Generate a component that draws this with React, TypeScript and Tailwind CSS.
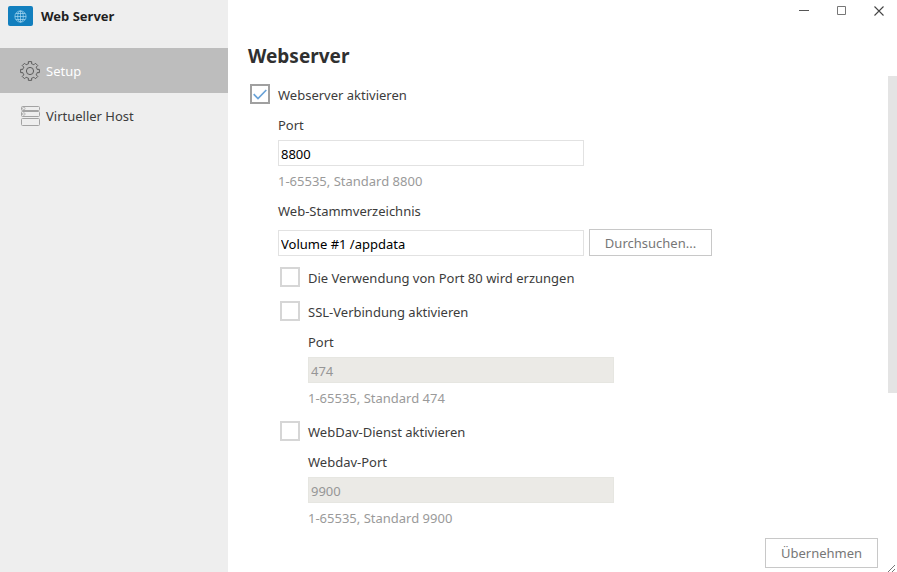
import { useState } from "react";
import type { ReactNode } from "react";

function GlobeLogo() {
  return (
    <span className="flex h-5 w-[25px] items-center justify-center rounded-xs bg-[#127fbe]">
      <svg width="13" height="13" viewBox="0 0 13 13" fill="none" stroke="#a9daf2" strokeWidth="0.7" aria-hidden="true">
        <circle cx="6.5" cy="6.5" r="5.6" />
        <ellipse cx="6.5" cy="6.5" rx="2.8" ry="5.6" />
        <path d="M6.5 0.9v11.2M0.9 6.5h11.2M1.8 3.5h9.4M1.8 9.5h9.4" />
      </svg>
    </span>
  );
}

// Outline of an eight-toothed gear centred on (10, 10).
function gearPath() {
  const at = (radius: number, degrees: number) => {
    const a = (degrees * Math.PI) / 180;
    return `${(10 + radius * Math.sin(a)).toFixed(2)} ${(10 - radius * Math.cos(a)).toFixed(2)}`;
  };
  let d = `M${at(7.3, -13)}`;
  for (let i = 0; i < 8; i++) {
    const c = i * 45;
    d += `L${at(9.5, c - 10)}L${at(9.5, c + 10)}L${at(7.3, c + 13)}A7.3 7.3 0 0 1 ${at(7.3, c + 32)}`;
  }
  return `${d}Z`;
}

function GearIcon() {
  return (
    <svg width="20" height="20" viewBox="0 0 20 20" fill="none" stroke="#5c5c5c" strokeWidth="1" strokeLinejoin="round" aria-hidden="true">
      <path d={gearPath()} />
      <circle cx="10" cy="10" r="3.6" />
    </svg>
  );
}

function HostIcon() {
  return (
    <svg width="20" height="20" viewBox="0 0 20 20" fill="none" stroke="#a3a3a3" strokeWidth="1" aria-hidden="true">
      <rect x="1.5" y="0.5" width="18" height="4" rx="1" />
      <rect x="1.5" y="5.5" width="18" height="5" rx="1" />
      <rect x="1.5" y="12.5" width="18" height="7" rx="1" />
      <circle cx="3.8" cy="2.5" r="1.3" strokeWidth="0.7" />
      <circle cx="3.8" cy="8" r="1.3" strokeWidth="0.7" />
    </svg>
  );
}

function NavItem({ icon, text, active = false }: { icon: ReactNode; text: string; active?: boolean }) {
  return (
    <a
      href="#"
      aria-current={active ? "page" : undefined}
      className={`flex h-[45px] items-center gap-1.5 pl-5 ${active ? "bg-[#bdbdbd] text-white" : "text-[#3c3c3c]"}`}
    >
      {icon}
      {text}
    </a>
  );
}

type CheckRowProps = { id: string; text: string; checked: boolean; onChange: (value: boolean) => void };

function CheckRow({ id, text, checked, onChange }: CheckRowProps) {
  return (
    <div className="mt-0.5 flex h-8 items-center gap-2">
      <span className="grid size-5 place-items-center">
        <input
          id={id}
          type="checkbox"
          checked={checked}
          onChange={(e) => onChange(e.target.checked)}
          className="col-start-1 row-start-1 size-5 appearance-none border-2 border-[#d6d6d6] bg-white checked:border-[#a0a0a0]"
        />
        {checked && (
          <svg width="14" height="11" viewBox="0 0 14 11" fill="none" stroke="#6aa3d8" strokeWidth="1.7" className="pointer-events-none col-start-1 row-start-1" aria-hidden="true">
            <path d="M0.7 5.2L5 9.5L13.3 1" />
          </svg>
        )}
      </span>
      <label htmlFor={id} className="pt-0.5">{text}</label>
    </div>
  );
}

function FieldLabel({ id, text }: { id: string; text: string }) {
  return <label htmlFor={id} className="block leading-[30px]">{text}</label>;
}

function TextField({ id, value, disabled = false }: { id: string; value: string; disabled?: boolean }) {
  return (
    <input
      id={id}
      type="text"
      defaultValue={value}
      disabled={disabled}
      className="block h-[26px] w-[306px] border border-[#e2e2e2] bg-white px-0.5 pt-0.5 text-black disabled:border-[#e6e6e1] disabled:bg-[#ebeae6] disabled:text-[#969696]"
    />
  );
}

function Hint({ text }: { text: string }) {
  return <p className="leading-[30px] text-[#9a9a9a]">{text}</p>;
}

export default function App() {
  const [enabled, setEnabled] = useState(true);
  const [force80, setForce80] = useState(false);
  const [ssl, setSsl] = useState(false);
  const [webdav, setWebdav] = useState(false);

  return (
    <div className="flex min-h-screen bg-white font-['Noto_Sans','Open_Sans',sans-serif] text-[13px] leading-5 text-[#3c3c3c]">
      <aside className="w-[228px] shrink-0 bg-[#eeeeee]">
        <header className="flex h-12 items-start gap-2 pt-1.5 pl-2">
          <GlobeLogo />
          <span className="font-bold text-[#1f1f1f]">Web Server</span>
        </header>
        <nav>
          <NavItem icon={<GearIcon />} text="Setup" active />
          <NavItem icon={<HostIcon />} text="Virtueller Host" />
        </nav>
      </aside>

      <main className="flex min-w-0 flex-1 flex-col">
        <div className="flex h-[22px] justify-end">
          <button type="button" aria-label="Minimieren" className="flex w-[38px] items-center justify-center">
            <svg width="10" height="10" viewBox="0 0 10 10" stroke="#555555" aria-hidden="true"><path d="M0 4.5h10" /></svg>
          </button>
          <button type="button" aria-label="Maximieren" className="flex w-[38px] items-center justify-center">
            <svg width="10" height="10" viewBox="0 0 10 10" fill="none" stroke="#777777" aria-hidden="true"><path d="M0.5 0.5h8v8h-8z" /></svg>
          </button>
          <button type="button" aria-label="Schließen" className="flex w-9 items-center justify-center">
            <svg width="10" height="10" viewBox="0 0 10 10" stroke="#444444" strokeWidth="1.1" aria-hidden="true"><path d="M0.5 0.5l9 9M9.5 0.5l-9 9" /></svg>
          </button>
        </div>

        <h1 className="h-[54px] pt-5 pl-5 text-[19px] leading-7 font-bold text-[#303030]">Webserver</h1>

        <div className="flex flex-1">
          <form className="flex-1 pl-[22px]" onSubmit={(e) => e.preventDefault()}>
            <CheckRow id="enable" text="Webserver aktivieren" checked={enabled} onChange={setEnabled} />
            <div className="pl-7">
              <FieldLabel id="port" text="Port" />
              <TextField id="port" value="8800" />
              <Hint text="1-65535, Standard 8800" />
              <FieldLabel id="root-dir" text="Web-Stammverzeichnis" />
              <div className="flex items-end gap-[5px] pt-[3px] pb-0.5">
                <TextField id="root-dir" value="Volume #1 /appdata" />
                <button type="button" className="h-[27px] w-[123px] border border-[#c8c8c8] bg-white pt-px text-[#777777]">
                  Durchsuchen...
                </button>
              </div>
            </div>
            <div className="pt-px pl-[30px]">
              <CheckRow id="force80" text="Die Verwendung von Port 80 wird erzungen" checked={force80} onChange={setForce80} />
              <CheckRow id="ssl" text="SSL-Verbindung aktivieren" checked={ssl} onChange={setSsl} />
              <div className="pl-7">
                <FieldLabel id="ssl-port" text="Port" />
                <TextField id="ssl-port" value="474" disabled={!ssl} />
                <Hint text="1-65535, Standard 474" />
              </div>
              <CheckRow id="webdav" text="WebDav-Dienst aktivieren" checked={webdav} onChange={setWebdav} />
              <div className="pl-7">
                <FieldLabel id="webdav-port" text="Webdav-Port" />
                <TextField id="webdav-port" value="9900" disabled={!webdav} />
                <Hint text="1-65535, Standard 9900" />
              </div>
            </div>
          </form>
          <div className="h-[317px] w-[9px] bg-[#e4e4e4]" />
        </div>

        <footer className="flex items-end justify-end">
          <button type="button" className="mb-1 h-[30px] w-[113px] border border-[#c8c8c8] bg-white text-[#777777]">
            Übernehmen
          </button>
          <span className="flex w-[19px] justify-end pr-0.5">
            <svg width="7" height="7" viewBox="0 0 7 7" stroke="#777777" aria-hidden="true"><path d="M0 7L7 0M4 7L7 4" /></svg>
          </span>
        </footer>
      </main>
    </div>
  );
}
